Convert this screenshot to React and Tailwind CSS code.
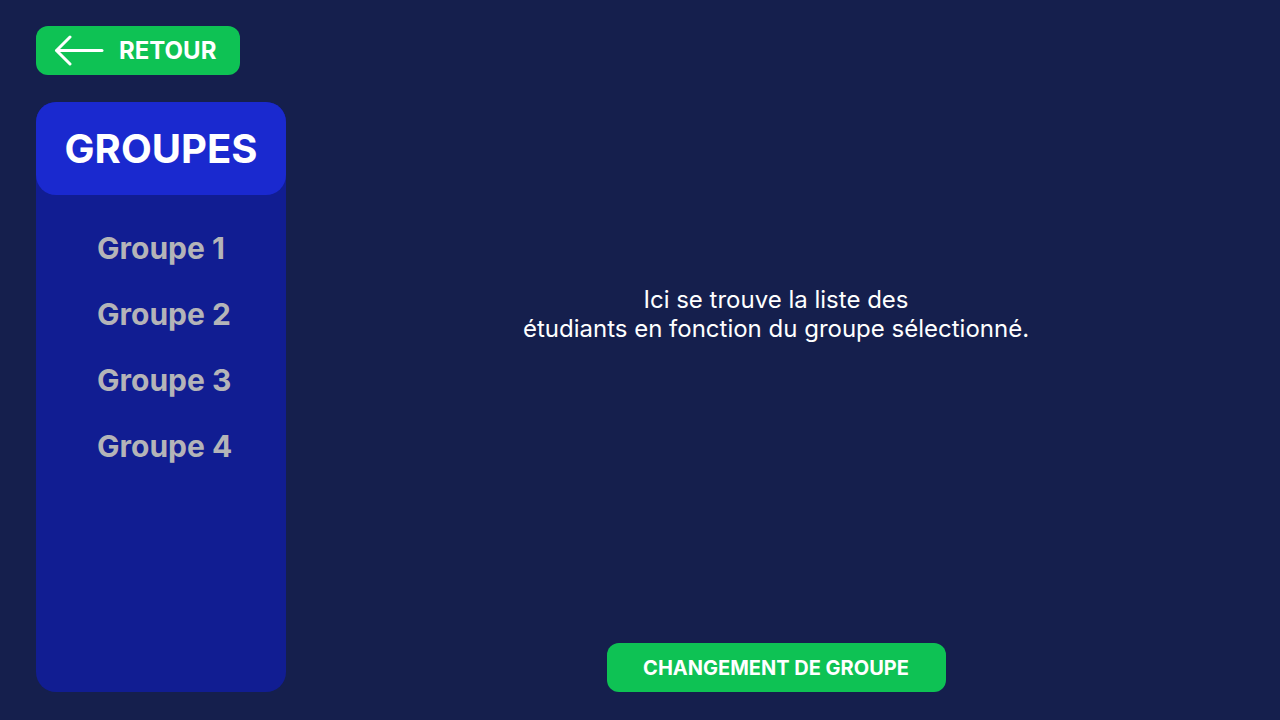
export default function App() {
  const groups = ["Groupe 1", "Groupe 2", "Groupe 3", "Groupe 4"];
  return (
    <div
      className="w-full h-[720px] bg-[#151f4d] flex px-[36px] pt-[26px] pb-[28px] overflow-hidden"
      style={{ fontFamily: "Inter, 'Noto Sans', sans-serif" }}
    >
      <div className="w-[250px] flex flex-col shrink-0">
        <button className="w-[204px] h-[49px] bg-[#0ec254] rounded-[12px] flex items-center pl-[18px] text-white">
          <svg width="50" height="32" viewBox="0 0 50 32" fill="none" stroke="white" strokeWidth="3" strokeLinecap="round" strokeLinejoin="round">
            <path d="M48 15.5H3" />
            <path d="M16 2L2.5 15.5L16 29" />
          </svg>
          <span className="ml-[15px] text-[24px] font-bold leading-none">RETOUR</span>
        </button>
        <div className="mt-[27px] flex-1 bg-[#111d92] rounded-[20px] flex flex-col">
          <div className="h-[93px] bg-[#1a29cf] rounded-[20px] flex items-center justify-center">
            <span className="text-white text-[40px] font-bold leading-none">GROUPES</span>
          </div>
          <div className="flex flex-col gap-[32px] pt-[36px] pl-[61px]">
            {groups.map((g) => (
              <div key={g} className="text-[#b4b4b8] text-[30px] font-bold leading-[34px]">
                {g}
              </div>
            ))}
          </div>
        </div>
      </div>
      <div className="flex-1 flex flex-col items-center ml-[11px] mr-[-11px]">
        <div className="mt-[259px] text-white text-[24px] leading-[29px] text-center">
          Ici se trouve la liste des
          <br />
          étudiants en fonction du groupe sélectionné.
        </div>
        <div className="flex-1" />
        <button className="w-[339px] h-[49px] bg-[#0ec254] rounded-[12px] text-white text-[20px] font-bold">
          CHANGEMENT DE GROUPE
        </button>
      </div>
    </div>
  );
}
